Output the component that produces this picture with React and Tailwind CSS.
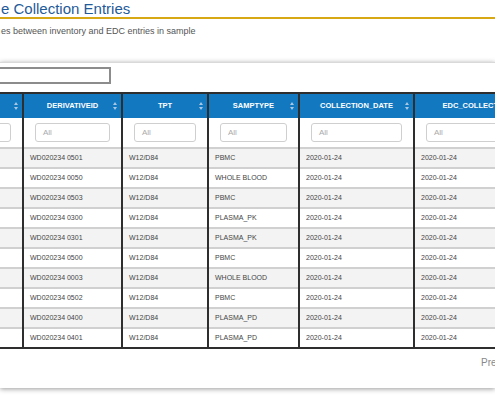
const rows = [
  { id: "WD020234 0501", type: "PBMC" },
  { id: "WD020234 0050", type: "WHOLE BLOOD" },
  { id: "WD020234 0503", type: "PBMC" },
  { id: "WD020234 0300", type: "PLASMA_PK" },
  { id: "WD020234 0301", type: "PLASMA_PK" },
  { id: "WD020234 0500", type: "PBMC" },
  { id: "WD020234 0003", type: "WHOLE BLOOD" },
  { id: "WD020234 0502", type: "PBMC" },
  { id: "WD020234 0400", type: "PLASMA_PD" },
  { id: "WD020234 0401", type: "PLASMA_PD" },
];

const columns = [
  { key: "subject", label: "", width: "w-[99px]" },
  { key: "id", label: "DerivativeID", width: "w-[99px]" },
  { key: "tpt", label: "TPT", width: "w-[86px]" },
  { key: "type", label: "SampType", width: "w-[91px]" },
  { key: "date", label: "Collection_Date", width: "w-[115px]" },
  { key: "edc", label: "EDC_Collection_Date", width: "w-[150px]" },
];

const SortIcon = () => (
  <svg width="4" height="8" viewBox="0 0 4 8" className="justify-self-end">
    <path d="M2 0 L4 3 H0 Z M0 5 H4 L2 8 Z" fill="#a9c6e2" />
  </svg>
);

const App = () => {
  return (
    <div className="w-[495px] h-[397px] overflow-hidden bg-white font-['Liberation_Sans',Arial,sans-serif]">
      <h1 className="text-[15px] leading-[17px] text-[#1f5b9a] border-b-2 border-[#d8a814] pl-px">
        e Collection Entries
      </h1>
      <p className="mt-[7px] text-[9px] leading-[11px] text-[#555] pl-px">
        es between inventory and EDC entries in sample
      </p>

      <div className="mt-[25px] h-[326px] bg-white border-t border-[#d9d9d9] shadow-[0_1px_5px_rgba(0,0,0,0.4)] pt-[4px]">
        <input
          type="text"
          className="block ml-[-50px] w-[161px] h-[17px] border-2 border-[#8c8c8c] bg-white outline-none"
        />

        <table className="mt-[8px] ml-[-77px] w-[640px] table-fixed border-collapse">
          <colgroup>
            {columns.map((col) => (
              <col key={col.key} className={col.width} />
            ))}
          </colgroup>
          <thead>
            <tr className="h-[25px] bg-[#1279c1] border-t-2 border-[#2e2e2e]">
              {columns.map((col) => (
                <th
                  key={col.key}
                  className="px-[4px] border-x-2 border-[#2e2e2e] text-white text-[7.5px] font-bold uppercase"
                >
                  <div className="grid grid-cols-[1fr_auto_1fr] items-center">
                    <span />
                    <span className="whitespace-nowrap">{col.label}</span>
                    <SortIcon />
                  </div>
                </th>
              ))}
            </tr>
            <tr className="h-[30px] bg-white border-b-2 border-[#d0d0d0]">
              {columns.map((col) => (
                <td key={col.key} className="px-[11px] border-x-2 border-[#2e2e2e]">
                  <div className="h-[19px] rounded-[3px] border border-[#cfcfcf] pl-[7px] flex items-center text-[8px] text-[#aaa]">
                    All
                  </div>
                </td>
              ))}
            </tr>
          </thead>
          <tbody>
            {rows.map((row, i) => (
              <tr
                key={row.id}
                className={`h-[20px] border-b-2 ${i === rows.length - 1 ? "border-[#2e2e2e]" : "border-[#d0d0d0]"} ${i % 2 === 0 ? "bg-[#f3f3f3]" : "bg-white"}`}
              >
                <td className="border-x-2 border-[#2e2e2e]" />
                <td className="pl-[6px] border-x-2 border-[#2e2e2e] text-[7px] text-[#444] whitespace-nowrap">{row.id}</td>
                <td className="pl-[6px] border-x-2 border-[#2e2e2e] text-[7px] text-[#444]">W12/D84</td>
                <td className="pl-[6px] border-x-2 border-[#2e2e2e] text-[7px] text-[#444] whitespace-nowrap">{row.type}</td>
                <td className="pl-[6px] border-x-2 border-[#2e2e2e] text-[7px] text-[#444]">2020-01-24</td>
                <td className="pl-[6px] border-x-2 border-[#2e2e2e] text-[7px] text-[#444]">2020-01-24</td>
              </tr>
            ))}
          </tbody>
        </table>

        <div className="mt-[8px] pl-[481px] whitespace-nowrap text-[10px] leading-[12px] text-[#888]">
          Previous
        </div>
      </div>
    </div>
  );
};

export default App;
